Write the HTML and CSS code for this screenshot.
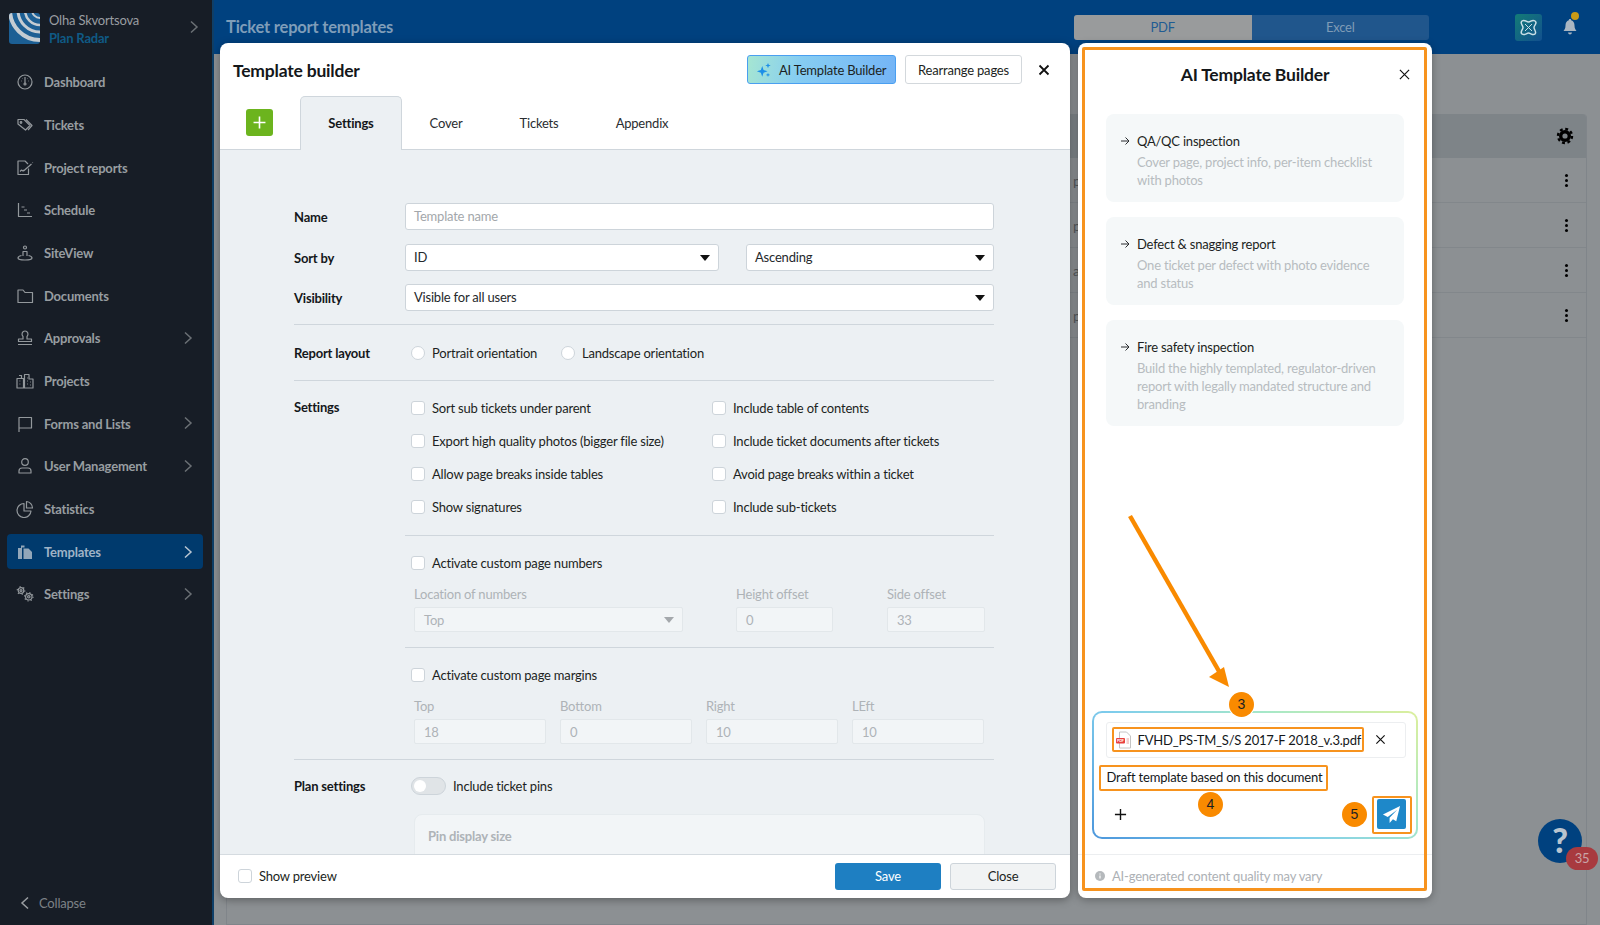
FILE: index.html

```html
<!DOCTYPE html>
<html lang="en">
<head>
  <meta charset="UTF-8" />
  <title>Ticket report templates</title>
  <link rel="stylesheet" href="styles.css">
</head>
<body>
  <aside class="sidebar">
    <div class="account">
      <svg class="logo" viewBox="0 0 31 31">
        <defs><clipPath id="logoClip"><rect width="31" height="31" rx="3"/></clipPath></defs>
        <g clip-path="url(#logoClip)" fill="none">
          <rect width="31" height="31" fill="#1c5f94"/>
          <circle cx="31" cy="-3" r="8" stroke="#c4ccd2" stroke-width="2"/>
          <circle cx="31" cy="-3" r="15" stroke="#c4ccd2" stroke-width="2.500"/>
          <circle cx="31" cy="-3" r="22" stroke="#c4ccd2" stroke-width="3"/>
          <circle cx="31" cy="-3" r="30" stroke="#c4ccd2" stroke-width="4"/>
        </g>
      </svg>
      <div class="account-text">
        <div class="account-name">Olha Skvortsova</div>
        <div class="account-org">Plan Radar</div>
      </div>
      <svg class="chev chev-top" viewBox="0 0 10 14"><path d="M2 1.500 8 7l-6 5.500"/></svg>
    </div>
    <nav class="nav">
      <a class="nav-item"><svg class="nav-icon" viewBox="0 0 18 18"><circle cx="9" cy="9" r="7"/><path d="M9 4v6M5 8h.6M12.400 8h.6M6.500 5.500h.4M11.100 5.500h.4"/><circle cx="9" cy="11" r="1"/></svg>Dashboard</a>
      <a class="nav-item"><svg class="nav-icon" viewBox="0 0 18 18"><path d="M2 3.500h6l6 6-4.500 4.500L2 8z"/><path d="M10 3.500l6 6-4 4.500"/><circle cx="5" cy="6.500" r=".8"/></svg>Tickets</a>
      <a class="nav-item"><svg class="nav-icon" viewBox="0 0 18 18"><path d="M12.500 9.500V15.500H2V2h7l3 3"/><path d="M7.500 12 15.500 5M16.500 3.500l.3.3"/><path d="M4 12.500l1.500-1.500 1.500 1 1-1"/></svg>Project reports</a>
      <a class="nav-item"><svg class="nav-icon" viewBox="0 0 18 18"><path d="M2.500 2v13.500h13.500M5.500 6h3M8 9h3M11 12h3"/></svg>Schedule</a>
      <a class="nav-item"><svg class="nav-icon" viewBox="0 0 18 18"><circle cx="9" cy="3.500" r="1.500"/><path d="M7 12V7.500h4V12M5.500 11.500C3.500 12 2 12.800 2 14c0 1.300 3 2 7 2s7-.7 7-2c0-1.200-1.500-2-3.500-2.500"/></svg>SiteView</a>
      <a class="nav-item"><svg class="nav-icon" viewBox="0 0 18 18"><path d="M2 3h5l2 2.500h7.500V15.500H2z"/></svg>Documents</a>
      <a class="nav-item"><svg class="nav-icon" viewBox="0 0 18 18"><path d="M2 15.500h14M2.500 12.500h13v-2.500H11V7.500c1-1 1.300-2 .8-3.500C11.300 2.700 10.200 2 9 2s-2.300.7-2.800 2c-.5 1.500-.2 2.500.8 3.500V10H2.500z"/></svg>Approvals<svg class="chev" viewBox="0 0 10 14"><path d="M2 1.500 8 7l-6 5.500"/></svg></a>
      <a class="nav-item"><svg class="nav-icon" viewBox="0 0 18 18"><path d="M1 6.500h6.500V16H1zM8.500 16V2.500H13V7h4v9zM3 3.500h2.500v3M3.500 9h.8M3.500 12h.8M11 6h.8M11 9h.8M11 12h.8M14 10h.8M14 13h.8"/></svg>Projects</a>
      <a class="nav-item"><svg class="nav-icon" viewBox="0 0 18 18"><path d="M3 17V2.500h12.500V13H3"/></svg>Forms and Lists<svg class="chev" viewBox="0 0 10 14"><path d="M2 1.500 8 7l-6 5.500"/></svg></a>
      <a class="nav-item"><svg class="nav-icon" viewBox="0 0 18 18"><circle cx="9" cy="5" r="3.300"/><path d="M3 16v-2c0-2 1.500-3 3-3h6c1.500 0 3 1 3 3v2z"/></svg>User Management<svg class="chev" viewBox="0 0 10 14"><path d="M2 1.500 8 7l-6 5.500"/></svg></a>
      <a class="nav-item"><svg class="nav-icon" viewBox="0 0 18 18"><path d="M8 3.500a7 7 0 1 0 7 7.500H8z"/><path d="M10.500 1.500a6.500 6.500 0 0 1 6 6.500h-6z"/></svg>Statistics</a>
      <a class="nav-item nav-active"><svg class="nav-icon nav-icon-solid" viewBox="0 0 18 18"><path d="M5 2.500h3.500v2H6V16H2V5h3z"/><path d="M7.500 5.500h5l3.500 3.500v7H7.500z"/></svg>Templates<svg class="chev" viewBox="0 0 10 14"><path d="M2 1.500 8 7l-6 5.500"/></svg></a>
      <a class="nav-item"><svg class="nav-icon" viewBox="0 0 18 18"><circle cx="5" cy="5.500" r="2.800"/><circle cx="5" cy="5.500" r="1"/><circle cx="12.800" cy="11.800" r="3.200"/><circle cx="12.800" cy="11.800" r="1.200"/><circle cx="5" cy="5.500" r="3.800" stroke-dasharray="1.200 2.780"/><circle cx="12.800" cy="11.800" r="4.200" stroke-dasharray="1.200 2.100"/></svg>Settings<svg class="chev" viewBox="0 0 10 14"><path d="M2 1.500 8 7l-6 5.500"/></svg></a>
    </nav>
    <div class="collapse"><svg class="chev" viewBox="0 0 10 14"><path d="M8 1.500 2 7l6 5.500"/></svg>Collapse</div>
  </aside>

  <main class="main">
    <header class="topbar">
      <div class="page-title">Ticket report templates</div>
      <div class="format-toggle">
        <span class="format format-on">PDF</span>
        <span class="format">Excel</span>
      </div>
      <svg class="ai-badge" viewBox="0 0 27 27">
        <defs><linearGradient id="aiBadge" x1="0" y1="0" x2="1" y2="1"><stop offset="0" stop-color="#137c76"/><stop offset="1" stop-color="#12508f"/></linearGradient></defs>
        <rect width="27" height="27" rx="3" fill="url(#aiBadge)"/>
        <path d="M7 7c3-2 4 1 6.500 1S17 5 20 7s-1 4-1 6.500 3 4.500 1 6.500-4.500-1-6.500-1-4 3-6.500 1 1-4.500 1-6.500S4.500 9 7 7z" fill="none" stroke="#c9dfe6" stroke-width="1.500"/>
        <path d="M10 10l7 7M17 10l-7 7" stroke="#c9dfe6" stroke-width="1"/>
      </svg>
      <div class="bell">
        <svg viewBox="0 0 16 18"><path d="M8 1c-.8 0-1.200.5-1.200 1.200C4.500 3 3.500 5 3.500 7.500c0 3-1 4-2 5.500h13c-1-1.500-2-2.500-2-5.500 0-2.500-1-4.500-3.300-5.300C9.200 1.500 8.800 1 8 1zM6 14.500c.2 1.200 1 2 2 2s1.800-.8 2-2z" fill="#aab6c2"/></svg>
        <span class="bell-dot"></span>
      </div>
    </header>
    <section class="content">
      <div class="table-card">
        <div class="table-head">
          <svg class="gear" viewBox="0 0 18 18"><circle cx="9" cy="9" r="4.300" fill="none" stroke="#000" stroke-width="3.400"/><circle cx="9" cy="9" r="7" fill="none" stroke="#000" stroke-width="2.400" stroke-dasharray="2.900 2.600"/></svg>
        </div>
        <div class="table-row"><span>p</span><i class="kebab"></i></div>
        <div class="table-row"><span>p</span><i class="kebab"></i></div>
        <div class="table-row"><span>a</span><i class="kebab"></i></div>
        <div class="table-row"><span>p</span><i class="kebab"></i></div>
      </div>
    </section>
  </main>

  <div class="modal">
    <div class="modal-head">
      <h2 class="modal-title">Template builder</h2>
      <button class="btn-ai">
        <svg viewBox="0 0 18 18"><path d="M7 4.500 8.500 9 13 10.500 8.500 12 7 16.500 5.500 12 1 10.500 5.500 9z" fill="#1c8fe8"/><path d="M13.500 1 14.300 3.200 16.500 4 14.300 4.800 13.500 7 12.700 4.800 10.500 4 12.700 3.200zM13.500 12 14.100 13.900 16 14.500 14.100 15.100 13.500 17 12.900 15.100 11 14.500 12.900 13.900z" fill="#1c8fe8"/></svg>
        AI Template Builder
      </button>
      <button class="btn-plain">Rearrange pages</button>
      <svg class="close-x" viewBox="0 0 12 12"><path d="M1.500 1.500l9 9M10.500 1.500l-9 9"/></svg>
    </div>
    <div class="tabs">
      <button class="add-tab"><svg viewBox="0 0 12 12"><path d="M6 .5v11M.5 6h11"/></svg></button>
      <span class="tab tab-on">Settings</span>
      <span class="tab tab-cover">Cover</span>
      <span class="tab tab-tickets">Tickets</span>
      <span class="tab tab-appendix">Appendix</span>
    </div>
    <div class="modal-body">
      <div class="form">
        <div class="row row-name">
          <div class="row-label">Name</div>
          <div class="field placeholder">Template name</div>
        </div>
        <div class="row row-sort">
          <div class="row-label">Sort by</div>
          <div class="field select sort-id">ID<i class="caret"></i></div>
          <div class="field select sort-dir">Ascending<i class="caret"></i></div>
        </div>
        <div class="row row-vis">
          <div class="row-label">Visibility</div>
          <div class="field select">Visible for all users<i class="caret"></i></div>
        </div>

        <div class="row section-layout">
          <div class="row-label">Report layout</div>
          <label class="opt opt-portrait"><i class="radio"></i>Portrait orientation</label>
          <label class="opt"><i class="radio"></i>Landscape orientation</label>
        </div>

        <div class="row section-settings">
          <div class="row-label">Settings</div>
          <div class="check-grid">
            <label class="opt"><i class="check"></i>Sort sub tickets under parent</label>
            <label class="opt"><i class="check"></i>Include table of contents</label>
            <label class="opt"><i class="check"></i>Export high quality photos (bigger file size)</label>
            <label class="opt"><i class="check"></i>Include ticket documents after tickets</label>
            <label class="opt"><i class="check"></i>Allow page breaks inside tables</label>
            <label class="opt"><i class="check"></i>Avoid page breaks within a ticket</label>
            <label class="opt"><i class="check"></i>Show signatures</label>
            <label class="opt"><i class="check"></i>Include sub-tickets</label>
          </div>
        </div>

        <div class="sub-section sub-numbers">
          <label class="opt"><i class="check"></i>Activate custom page numbers</label>
          <div class="muted-grid numbers-grid">
            <div class="muted-field"><span>Location of numbers</span><div class="muted-input">Top<i class="caret caret-muted"></i></div></div>
            <div class="muted-field"><span>Height offset</span><div class="muted-input">0</div></div>
            <div class="muted-field"><span>Side offset</span><div class="muted-input">33</div></div>
          </div>
        </div>

        <div class="sub-section sub-margins">
          <label class="opt"><i class="check"></i>Activate custom page margins</label>
          <div class="muted-grid margins-grid">
            <div class="muted-field"><span>Top</span><div class="muted-input">18</div></div>
            <div class="muted-field"><span>Bottom</span><div class="muted-input">0</div></div>
            <div class="muted-field"><span>Right</span><div class="muted-input">10</div></div>
            <div class="muted-field"><span>LEft</span><div class="muted-input">10</div></div>
          </div>
        </div>

        <div class="plan">
          <div class="row plan-row">
            <div class="row-label">Plan settings</div>
            <label class="opt"><i class="toggle"></i>Include ticket pins</label>
          </div>
          <div class="pin-card">Pin display size</div>
        </div>
      </div>
    </div>
    <div class="modal-foot">
      <label class="opt"><i class="check"></i>Show preview</label>
      <button class="btn-save">Save</button>
      <button class="btn-close">Close</button>
    </div>
  </div>

  <div class="ai-panel">
    <div class="ai-head">
      <h2 class="ai-title">AI Template Builder</h2>
      <svg class="ai-x" viewBox="0 0 12 12"><path d="M1 1l10 10M11 1 1 11"/></svg>
    </div>
    <div class="ai-cards">
      <div class="ai-card">
        <div class="ai-card-title"><svg viewBox="0 0 10 10"><path d="M1 5h8M5.500 1.500 9 5 5.500 8.500"/></svg>QA/QC inspection</div>
        <p>Cover page, project info, per-item checklist<br>with photos</p>
      </div>
      <div class="ai-card">
        <div class="ai-card-title"><svg viewBox="0 0 10 10"><path d="M1 5h8M5.500 1.500 9 5 5.500 8.500"/></svg>Defect &amp; snagging report</div>
        <p>One ticket per defect with photo evidence<br>and status</p>
      </div>
      <div class="ai-card">
        <div class="ai-card-title"><svg viewBox="0 0 10 10"><path d="M1 5h8M5.500 1.500 9 5 5.500 8.500"/></svg>Fire safety inspection</div>
        <p>Build the highly templated, regulator-driven<br>report with legally mandated structure and<br>branding</p>
      </div>
    </div>
    <div class="chat">
      <div class="attach">
        <div class="attach-file mark">
          <svg viewBox="0 0 16 18"><path d="M3.500 1h7l4 4v12h-11z" fill="#fff" stroke="#c4c4c4"/><rect x="0" y="7" width="9" height="5.500" rx="1" fill="#e8403f"/><text x="1" y="11.200" font-size="3.800" font-weight="700" fill="#fff">PDF</text><path d="M10.500 8h2.500M10.500 10h2.500M10.500 12h2.500" stroke="#e8a0a0"/></svg>
          <span>FVHD_PS-TM_S/S 2017-F 2018_v.3.pdf</span>
        </div>
        <svg class="attach-x" viewBox="0 0 12 12"><path d="M1.500 1.500l9 9M10.500 1.500l-9 9"/></svg>
      </div>
      <div class="prompt mark">Draft template based on this document</div>
      <div class="chat-foot">
        <svg class="chat-plus" viewBox="0 0 14 14"><path d="M7 1v12M1 7h12"/></svg>
        <div class="send-wrap mark">
          <button class="send"><svg viewBox="0 0 20 20"><path d="M19 1 1 10l5 2.500L16 5 8 13.500V19l3.500-4 3.500 2z" fill="#fff"/></svg></button>
        </div>
      </div>
    </div>
    <div class="ai-foot">
      <svg viewBox="0 0 10 10"><circle cx="5" cy="5" r="5" fill="#b5b9bc"/><path d="M5 4.500v3M5 2.500v1" stroke="#fff" stroke-width="1.200"/></svg>
      AI-generated content quality may vary
    </div>
    <svg class="callout-arrow" viewBox="0 0 130 190"><path d="M6 5 96 162" stroke="#f98a00" stroke-width="4.500" fill="none"/><path d="M105 176 85 166 100 156z" fill="#f98a00"/></svg>
    <span class="step step-3">3</span>
    <span class="step step-4">4</span>
    <span class="step step-5">5</span>
    <div class="panel-outline"></div>
  </div>

  <div class="help">?<span class="help-count">35</span></div>
</body>
</html>
```

FILE: styles.css

```css
* {
  box-sizing: border-box;
}
body {
  margin: 0;
  width: 1600px;
  height: 925px;
  overflow: hidden;
  display: flex;
  position: relative;
  font-family: "Lato", "Open Sans", sans-serif;
  font-size: 13px;
  letter-spacing: -0.2px;
  color: #1c1f22;
  background: #8c9093;
}
button {
  font-family: inherit;
  letter-spacing: inherit;
}
label {
  display: flex;
  align-items: center;
}
h2 {
  margin: 0;
}

/* sidebar */
.sidebar {
  width: 214px;
  flex: none;
  background: #171d26;
  border-right: 2px solid #0f3f68;
  display: flex;
  flex-direction: column;
  color: #989da1;
  font-weight: 700;
}
.account {
  height: 61px;
  padding: 13px 0 0 9px;
  display: flex;
  position: relative;
}
.logo {
  width: 31px;
  height: 31px;
}
.account-text {
  margin: -2px 0 0 9px;
  line-height: 18px;
}
.account-name {
  font-weight: 400;
  color: #9a9ea2;
}
.account-org {
  color: #0f5a85;
}
.chev {
  width: 10px;
  height: 14px;
  fill: none;
  stroke: #6b7075;
  stroke-width: 1.500;
}
.chev-top {
  position: absolute;
  left: 189px;
  top: 20px;
}
.nav {
  padding: 0 9px 0 7px;
}
.nav-item {
  height: 42.670px;
  display: flex;
  align-items: center;
  padding-left: 9px;
  border-radius: 4px;
  position: relative;
}
.nav-icon {
  width: 18px;
  height: 18px;
  margin-right: 10px;
  fill: none;
  stroke: #93989c;
  stroke-width: 1.200;
  stroke-linejoin: round;
}
.nav-icon-solid {
  fill: #93a7b9;
  stroke: none;
}
.nav-item .chev {
  position: absolute;
  left: 176px;
  top: 14px;
}
.nav-active {
  height: 35px;
  margin: 4px 0 3.500px;
  background: #003a6d;
  color: #9fb3c6;
}
.nav-active .chev {
  top: 10.500px;
  stroke: #b9c6d2;
}
.collapse {
  margin-top: auto;
  height: 44px;
  display: flex;
  align-items: center;
  padding-left: 20px;
  font-weight: 400;
  color: #7d8287;
}
.collapse .chev {
  margin-right: 9px;
  stroke: #9a9ea2;
}

/* page behind the dialogs */
.main {
  flex: 1;
  display: flex;
  flex-direction: column;
}
.topbar {
  height: 54px;
  background: #00417f;
  display: flex;
  align-items: center;
  padding: 0 0 0 12px;
}
.page-title {
  width: 848px;
  font-size: 16.500px;
  font-weight: 700;
  color: #7f9db9;
}
.format-toggle {
  display: flex;
  width: 355px;
  height: 25px;
  border-radius: 3px;
  overflow: hidden;
  background: #20568c;
}
.format {
  flex: 1;
  text-align: center;
  line-height: 25px;
  color: #7f9bb6;
}
.format-on {
  background: #999b9c;
  color: #1f5c93;
}
.ai-badge {
  width: 27px;
  height: 27px;
  margin-left: 86px;
}
.bell {
  position: relative;
  width: 16px;
  height: 18px;
  margin-left: 20px;
}
.bell svg {
  display: block;
}
.bell-dot {
  position: absolute;
  left: 9px;
  top: -6px;
  width: 8px;
  height: 8px;
  border-radius: 50%;
  background: #c99a16;
}
.content {
  flex: 1;
  padding: 60px 13px 0 12px;
}
.table-card {
  border-radius: 4px 4px 0 0;
  border: 1px solid #80858a;
  border-top: none;
  height: 100%;
}
.table-head {
  height: 44px;
  background: #7e8488;
  border-radius: 4px 4px 0 0;
  display: flex;
  justify-content: flex-end;
  align-items: center;
  padding-right: 12px;
}
.gear {
  width: 18px;
  height: 18px;
}
.table-row {
  height: 45px;
  border-bottom: 1px solid #82878b;
  display: flex;
  align-items: center;
  padding: 0 18px 0 846px;
  justify-content: space-between;
  color: #53575a;
  font-size: 14px;
}
.kebab {
  width: 3px;
  height: 3px;
  border-radius: 50%;
  background: #000;
  box-shadow: 0 -5px 0 #000, 0 5px 0 #000;
}

/* template builder */
.modal {
  position: absolute;
  left: 220px;
  top: 43px;
  width: 850px;
  height: 855px;
  background: #fff;
  border-radius: 8px;
  overflow: hidden;
  display: flex;
  flex-direction: column;
  box-shadow: 0 2px 8px rgba(0,0,0,0.35);
}
.modal-head {
  height: 53px;
  padding: 12px 20px 0 13px;
  display: flex;
  align-items: flex-start;
}
.modal-title {
  font-size: 17.500px;
  font-weight: 700;
  line-height: 31px;
  color: #14171a;
  margin-right: auto;
}
.btn-ai {
  width: 149px;
  height: 29px;
  border: 1px solid #4a9ff0;
  border-radius: 3px;
  background: linear-gradient(100deg, #a6e6d2 0%, #86cdf2 35%, #74b4f6 100%);
  display: flex;
  align-items: center;
  padding: 0 0 0 8px;
  font-size: 13px;
  color: #1c1f22;
}
.btn-ai svg {
  width: 16px;
  height: 16px;
  margin-right: 7px;
}
.btn-plain {
  width: 117px;
  height: 29px;
  margin-left: 9px;
  border: 1px solid #d3d8dc;
  border-radius: 3px;
  background: #fff;
  font-size: 13px;
  color: #1c1f22;
}
.close-x {
  width: 12px;
  height: 12px;
  margin: 9px 0 0 16px;
  fill: none;
  stroke: #111;
  stroke-width: 1.800;
}
.tabs {
  height: 54px;
  border-bottom: 1px solid #cfd6dc;
  display: flex;
  position: relative;
  padding-left: 26px;
}
.add-tab {
  width: 27px;
  height: 27px;
  margin-top: 13px;
  border: none;
  border-radius: 3px;
  background: #6cb41e;
  padding: 7px;
}
.add-tab svg {
  display: block;
  fill: none;
  stroke: #fff;
  stroke-width: 1.500;
}
.tab {
  line-height: 54px;
  text-align: center;
  color: #2a2d30;
}
.tab-on {
  width: 102px;
  height: 54px;
  margin-left: 27px;
  background: #ecf0f3;
  border: 1px solid #cfd6dc;
  border-bottom: none;
  border-radius: 5px 5px 0 0;
  font-weight: 700;
  color: #14171a;
  line-height: 52px;
}
.tab-cover {
  width: 88px;
}
.tab-tickets {
  width: 98px;
}
.tab-appendix {
  width: 108px;
}
.modal-body {
  flex: 1;
  min-height: 0;
  overflow: hidden;
  background: #ecf0f3;
  border-bottom: 1px solid #d5dbe0;
}
.form {
  width: 774px;
  padding: 53px 0 0 74px;
}
.row {
  display: flex;
  align-items: center;
}
.row-label {
  width: 111px;
  flex: none;
  font-weight: 700;
  color: #14171a;
}
.field {
  flex: 1;
  height: 27px;
  background: #fff;
  border: 1px solid #cdd4da;
  border-radius: 3px;
  padding: 0 8px;
  line-height: 25px;
  position: relative;
  color: #25282b;
}
.placeholder {
  color: #a3a7ab;
}
.row-name {
  margin-bottom: 14px;
}
.row-sort {
  margin-bottom: 13px;
}
.sort-id {
  flex: none;
  width: 314px;
}
.sort-dir {
  flex: none;
  width: 248px;
  margin-left: 27px;
}
.caret {
  position: absolute;
  right: 8px;
  top: 10px;
  border: 5px solid transparent;
  border-top: 6px solid #111;
  border-bottom: none;
}
.section-layout {
  margin-top: 13px;
  height: 57px;
  border-top: 1px solid #cfd6dc;
  border-bottom: 1px solid #cfd6dc;
}
.opt {
  color: #1c1f22;
  white-space: nowrap;
}
.opt-portrait {
  width: 150px;
}
.radio, .check {
  display: block;
  flex: none;
  width: 14px;
  height: 14px;
  margin: 0 7px 0 6px;
  background: #fff;
  border: 1px solid #cdd4da;
}
.radio {
  border-radius: 50%;
}
.check {
  border-radius: 3px;
}
.section-settings {
  align-items: flex-start;
  padding-top: 10px;
}
.section-settings .row-label {
  line-height: 33px;
}
.check-grid {
  display: grid;
  grid-template-columns: 301px 1fr;
  grid-auto-rows: 33px;
  flex: 1;
  padding-bottom: 12px;
  align-items: center;
  height: 144px;
}
.sub-section {
  margin-left: 111px;
  border-top: 1px solid #cfd6dc;
  height: 112px;
  padding-top: 17px;
}
.sub-section > .opt {
  height: 20px;
}
.muted-grid {
  display: grid;
  margin: 14px 0 0 9px;
  width: 571px;
}
.numbers-grid {
  grid-template-columns: 322px 151px 98px;
}
.margins-grid {
  grid-template-columns: 146px 146px 146px 132px;
}
.muted-field span {
  display: block;
  height: 14px;
  line-height: 14px;
  color: #aeb3b7;
  margin-bottom: 6px;
}
.muted-input {
  height: 25px;
  background: #f2f5f7;
  border: 1px solid #e2e7ea;
  border-radius: 2px;
  padding: 0 9px;
  line-height: 24px;
  color: #aeb3b7;
  position: relative;
}
.numbers-grid .muted-field:nth-child(1) .muted-input {
  width: 269px;
}
.numbers-grid .muted-field:nth-child(2) .muted-input {
  width: 97px;
}
.margins-grid .muted-field .muted-input {
  width: 132px;
}
.caret-muted {
  top: 9px;
  border-top-color: #a4a8ac;
}
.plan {
  border-top: 1px solid #cfd6dc;
  height: 110px;
}
.plan-row {
  padding-top: 17px;
}
.toggle {
  display: block;
  width: 35px;
  height: 18px;
  margin: 0 7px 0 6px;
  border: 1px solid #cdd4da;
  border-radius: 9px;
  background: #e0e4e7;
  position: relative;
}
.toggle::before {
  content: "";
  position: absolute;
  left: 2px;
  top: 2px;
  width: 12px;
  height: 12px;
  border-radius: 50%;
  background: #fff;
}
.pin-card {
  margin: 19px 0 0 120px;
  width: 571px;
  height: 70px;
  background: #f2f5f7;
  border: 1px solid #e6ebee;
  border-radius: 8px;
  padding: 13px;
  font-weight: 700;
  color: #aeb3b7;
}
.modal-foot {
  height: 43px;
  flex: none;
  display: flex;
  align-items: center;
  padding: 0 14px 1px 12px;
}
.btn-save, .btn-close {
  width: 106px;
  height: 27px;
  border-radius: 3px;
  font-size: 13px;
}
.btn-save {
  margin-left: auto;
  border: none;
  background: #1e7fc2;
  color: #fff;
}
.btn-close {
  margin-left: 9px;
  border: 1px solid #cdd4da;
  background: #f1f3f4;
  color: #1c1f22;
}

/* ai panel */
.ai-panel {
  position: absolute;
  left: 1078px;
  top: 43px;
  width: 354px;
  height: 855px;
  background: #fff;
  border-radius: 8px;
  box-shadow: 0 2px 8px rgba(0,0,0,0.3);
  display: flex;
  flex-direction: column;
}
.panel-outline {
  position: absolute;
  left: 4px;
  top: 4px;
  right: 5px;
  bottom: 7px;
  border: 3px solid #f7931e;
  border-radius: 2px;
}
.ai-head {
  height: 71px;
  display: flex;
  align-items: center;
  justify-content: center;
  position: relative;
  padding-bottom: 8px;
}
.ai-title {
  font-size: 17.500px;
  font-weight: 700;
  color: #14171a;
}
.ai-x {
  position: absolute;
  left: 321px;
  top: 26px;
  width: 11px;
  height: 11px;
  fill: none;
  stroke: #111;
  stroke-width: 1.300;
}
.ai-cards {
  padding: 0 28px;
  display: flex;
  flex-direction: column;
  gap: 15px;
}
.ai-card {
  background: #f5f8f9;
  border-radius: 8px;
  padding: 18px 14px 13px 31px;
  position: relative;
  min-height: 88px;
}
.ai-card-title {
  line-height: 18px;
  color: #1c1f22;
  position: relative;
}
.ai-card-title svg {
  position: absolute;
  left: -17px;
  top: 4px;
  width: 10px;
  height: 10px;
  fill: none;
  stroke: #2a2d30;
  stroke-width: 1;
}
.ai-card p {
  margin: 3px 0 0;
  line-height: 18px;
  color: #b7bcc0;
}
.chat {
  position: absolute;
  left: 14px;
  top: 668px;
  width: 326px;
  height: 128px;
  border: 2px solid transparent;
  border-radius: 10px;
  background: linear-gradient(#fff, #fff) padding-box,
    linear-gradient(35deg, #4c97dc 0%, #7fcdec 40%, #a7e8c8 70%, #dcef9c 100%) border-box;
  padding: 8.500px 11.500px 0;
}
.attach {
  height: 36px;
  width: 300px;
  border: 1px solid #eceef0;
  border-radius: 3px;
  display: flex;
  align-items: center;
  padding-left: 5px;
}
.mark {
  border: 2.500px solid #f7931e;
  border-radius: 2px;
}
.attach-file {
  width: 252px;
  height: 25px;
  display: flex;
  align-items: center;
  padding-left: 2px;
  white-space: nowrap;
  color: #14171a;
}
.attach-file svg {
  width: 16px;
  height: 18px;
  margin-right: 6px;
  flex: none;
}
.attach-x {
  width: 11px;
  height: 11px;
  margin-left: 11px;
  fill: none;
  stroke: #111;
  stroke-width: 1.300;
}
.prompt {
  width: 229px;
  height: 26px;
  margin: 7px 0 0 -7px;
  line-height: 21px;
  padding-left: 6px;
  white-space: nowrap;
  color: #14171a;
}
.chat-foot {
  display: flex;
  justify-content: space-between;
  align-items: center;
  margin-top: 5px;
  padding: 0 0 0 8px;
  width: 306px;
}
.chat-plus {
  width: 13px;
  height: 13px;
  fill: none;
  stroke: #111;
  stroke-width: 1.500;
}
.send-wrap {
  width: 40px;
  height: 38px;
  padding: 1.500px 3px;
}
.send {
  display: block;
  width: 29px;
  height: 30px;
  border: none;
  border-radius: 2px;
  background: #1e88c9;
  padding: 6px 5px;
}
.send svg {
  display: block;
  width: 19px;
  height: 19px;
}
.ai-foot {
  position: absolute;
  left: 0;
  right: 0;
  top: 811px;
  height: 42px;
  border-top: 1px solid #eceef0;
  display: flex;
  align-items: center;
  padding-left: 17px;
  color: #adb1b5;
  white-space: nowrap;
}
.ai-foot svg {
  width: 10px;
  height: 10px;
  margin-right: 7px;
}
.callout-arrow {
  position: absolute;
  left: 46px;
  top: 468px;
  width: 130px;
  height: 190px;
}
.step {
  position: absolute;
  width: 25px;
  height: 25px;
  border-radius: 50%;
  background: #f98a00;
  box-shadow: 0 0 0 1px #fff;
  text-align: center;
  line-height: 25px;
  font-family: "Liberation Sans", sans-serif;
  font-size: 14px;
  letter-spacing: 0;
  color: #1c1f22;
}
.step-3 {
  left: 151px;
  top: 649px;
}
.step-4 {
  left: 120px;
  top: 749px;
}
.step-5 {
  left: 264px;
  top: 759px;
}

/* help */
.help {
  position: absolute;
  left: 1538px;
  top: 819px;
  width: 44px;
  height: 44px;
  border-radius: 50%;
  background: #00417f;
  color: #b9c4cf;
  font-size: 34px;
  font-weight: 900;
  line-height: 42px;
  text-align: center;
}
.help-count {
  position: absolute;
  left: 28px;
  top: 28px;
  width: 32px;
  height: 23px;
  border-radius: 12px;
  background: #a83a3f;
  color: #c9a5a7;
  font-size: 13px;
  font-weight: 400;
  line-height: 23px;
}
```
